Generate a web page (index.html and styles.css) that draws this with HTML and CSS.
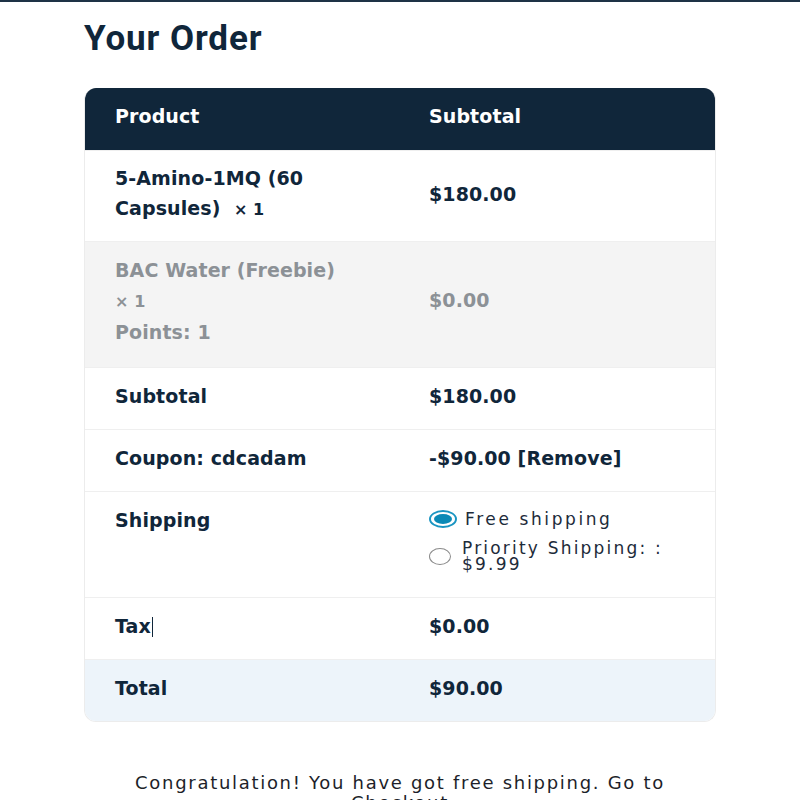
FILE: index.html
```html
<!DOCTYPE html>
<html>
<head>
<meta charset="utf-8">
<link rel="stylesheet" href="styles.css">
</head>
<body>
<div class="topbar"></div>
<main class="wrap">
  <h2 class="title">Your Order</h2>
  <div class="order">
    <div class="row head">
      <div class="cell">Product</div>
      <div class="cell">Subtotal</div>
    </div>
    <div class="row item">
      <div class="cell">5-Amino-1MQ (60 Capsules)&nbsp; <span class="qty">× 1</span></div>
      <div class="cell mid">$180.00</div>
    </div>
    <div class="row free">
      <div class="cell">BAC Water (Freebie)<br><span class="qty">× 1</span><br>Points: 1</div>
      <div class="cell mid">$0.00</div>
    </div>
    <div class="row">
      <div class="cell">Subtotal</div>
      <div class="cell">$180.00</div>
    </div>
    <div class="row">
      <div class="cell">Coupon: cdcadam</div>
      <div class="cell">-$90.00 [Remove]</div>
    </div>
    <div class="row ship">
      <div class="cell">Shipping</div>
      <div class="cell opts">
        <ul class="methods">
          <li><span class="radio on"></span><span class="lbl">Free shipping</span></li>
          <li><span class="radio"></span><span class="lbl">Priority Shipping: : $9.99</span></li>
        </ul>
      </div>
    </div>
    <div class="row">
      <div class="cell">Tax<span class="caret"></span></div>
      <div class="cell">$0.00</div>
    </div>
    <div class="row total">
      <div class="cell">Total</div>
      <div class="cell">$90.00</div>
    </div>
  </div>
  <p class="notice">Congratulation! You have got free shipping. Go to Checkout</p>
</main>
</body>
</html>
```
FILE: styles.css
```css
html, body { margin: 0; padding: 0; background: #fff; }
body { font-family: "DejaVu Sans", sans-serif; color: #10263a; overflow: hidden; height: 800px; }
.topbar { height: 2px; background: #1e3346; }
.wrap { width: 632px; margin: 0 0 0 84px; }
.title { margin: 17px 0 0 0; font-family: Roboto, sans-serif; font-size: 35px; font-weight: 700; letter-spacing: 0.9px; line-height: 40px; color: #10263a; }
.order { margin-top: 29px; border: 1px solid #ececec; border-top: 0; border-radius: 12px; overflow: hidden; width: 630px; }
.row { display: grid; grid-template-columns: 314px 316px; border-top: 1px solid #efefef; }
.row:first-child { border-top: 0; }
.cell { padding: 13px 30px 18px; font-size: 19px; font-weight: 700; line-height: 30px; letter-spacing: 0.1px; }
.cell.mid { display: flex; align-items: center; }
.head { background: #10263a; color: #fff; }
.head .cell { padding: 13px 30px 19px; }
.item .cell { padding: 12px 30px 16px; }
.free { background: #f4f4f4; color: #8c9196; }
.free .cell { padding: 13px 30px 20px; }
.free .cell.mid { padding-top: 11px; }
.qty { font-size: 16px; }
.ship .cell { padding-top: 13px; }
.ship .cell.opts { padding: 18px 30px 25px; }
.methods { list-style: none; margin: 0; padding: 0; font-weight: 400; font-size: 17px; letter-spacing: 2.6px; color: #1d2b3a; }
.methods li { display: flex; align-items: center; gap: 11px; }
.methods li + li { margin-top: 12px; }
.methods li + li .lbl { letter-spacing: 2.2px; }
.methods .lbl { line-height: 16px; }
.radio { width: 22px; height: 17px; border: 1.5px solid #8a8a8a; border-radius: 50%; flex: none; box-sizing: border-box; }
.radio.on { width: 28px; height: 18px; border: 2px solid #1a95c2; position: relative; margin-right: -3px; }
.radio.on::after { content: ""; position: absolute; left: 3px; top: 2px; width: 18px; height: 10px; border-radius: 50%; background: #0a89b6; }
.caret { display: inline-block; width: 1px; height: 20px; background: #10263a; vertical-align: -4px; margin-left: 1px; }
.total { background: #edf4fa; }
.notice { margin: 51px 0 0 16px; width: 600px; text-align: center; font-family: "DejaVu Sans", sans-serif; font-size: 18px; letter-spacing: 1.7px; line-height: 20px; color: #1d1f2a; }
```
